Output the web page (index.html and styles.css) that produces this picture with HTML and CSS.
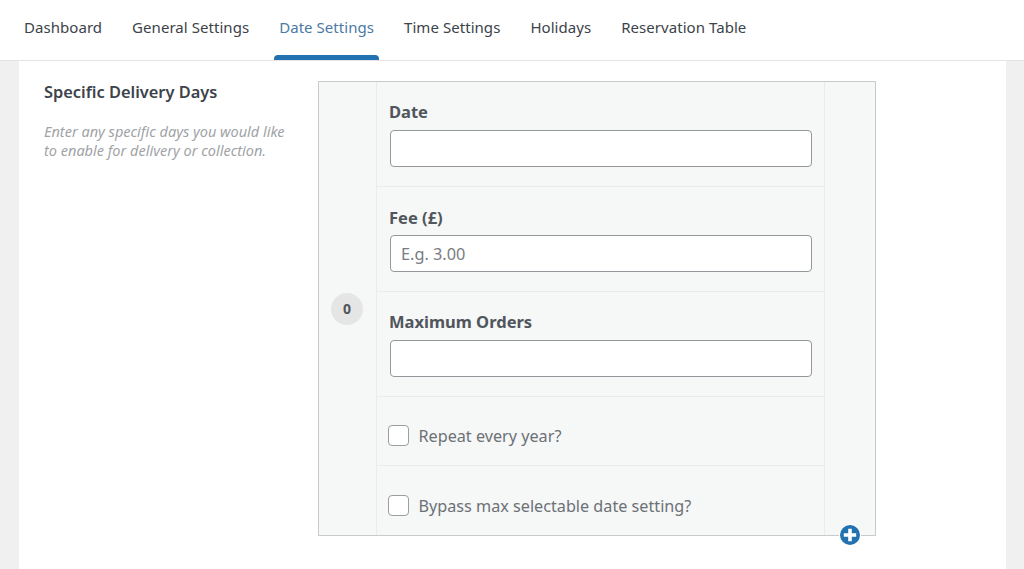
FILE: index.html
```html
<!DOCTYPE html>
<html lang="en">
<head>
<meta charset="utf-8">
<title>Date Settings</title>
<link rel="stylesheet" href="styles.css">
</head>
<body>
<nav class="tabs">
  <a class="tab">Dashboard</a>
  <a class="tab">General Settings</a>
  <a class="tab active">Date Settings</a>
  <a class="tab">Time Settings</a>
  <a class="tab">Holidays</a>
  <a class="tab">Reservation Table</a>
</nav>
<main class="panel">
  <div class="intro">
    <h2 class="title">Specific Delivery Days</h2>
    <p class="desc">Enter any specific days you would like to enable for delivery or collection.</p>
  </div>
  <div class="repeater">
    <div class="handle"><span class="count">0</span></div>
    <div class="fields">
      <div class="row field">
        <label class="label">Date</label>
        <input class="input" type="text">
      </div>
      <div class="row field fee">
        <label class="label">Fee (£)</label>
        <input class="input" type="text" placeholder="E.g. 3.00">
      </div>
      <div class="row field">
        <label class="label">Maximum Orders</label>
        <input class="input" type="text">
      </div>
      <div class="row check first">
        <span class="box"></span><span class="check-text">Repeat every year?</span>
      </div>
      <div class="row check last">
        <span class="box"></span><span class="check-text">Bypass max selectable date setting?</span>
      </div>
    </div>
    <div class="actions">
      <svg class="add" viewBox="0 0 22 22" aria-hidden="true">
        <circle cx="11" cy="11" r="11" fill="#fff"/>
        <circle cx="11" cy="11" r="10" fill="#2271b1"/>
        <path d="M9.2 4.8h3.6v4.4h4.4v3.6h-4.4v4.4H9.2v-4.4H4.8V9.2h4.4z" fill="#fff"/>
      </svg>
    </div>
  </div>
</main>
</body>
</html>
```
FILE: styles.css
```css
* { box-sizing: border-box; }
html, body { margin: 0; height: 100%; }
body {
  background: #f0f0f1;
  font-family: "Noto Sans", "Open Sans", sans-serif;
  color: #3c434a;
  overflow: hidden;
}
.tabs {
  display: flex;
  gap: 20px;
  height: 61px;
  padding-left: 19px;
  background: #fff;
  border-bottom: 1px solid #e2e4e7;
}
.tab {
  height: 60px;
  padding: 17px 5px 0;
  font-size: 15px;
  line-height: 21px;
  color: #3c434a;
  letter-spacing: 0.05px;
}
.tab.active {
  color: #4a7aa5;
  position: relative;
}
.tab.active::after {
  content: "";
  position: absolute;
  left: 0;
  right: 0;
  bottom: 0;
  height: 5px;
  background: #2271b1;
  border-radius: 4px 4px 0 0;
}
.panel {
  display: flex;
  margin: 0 18px 0 19px;
  height: 508px;
  padding: 20px 0 0 25px;
  background: #fff;
}
.intro { width: 274px; flex: none; }
.title {
  margin: 0;
  font-size: 16.4px;
  line-height: 22px;
  font-weight: 600;
  color: #3c434a;
}
.desc {
  margin: 19px 0 0;
  width: 250px;
  font-size: 14.5px;
  line-height: 19px;
  font-style: italic;
  color: #a0a3a6;
}
.repeater {
  display: flex;
  width: 558px;
  height: 455px;
  background: #f6f7f7;
  border: 1px solid #c8cacc;
}
.handle {
  display: flex;
  width: 58px;
  flex: none;
  align-items: center;
  justify-content: center;
  padding-right: 1px;
  border-right: 1px solid #e9ebec;
}
.count {
  display: flex;
  align-items: center;
  justify-content: center;
  width: 32px;
  height: 32px;
  border-radius: 50%;
  background: #e5e5e5;
  font-size: 14px;
  font-weight: 700;
  color: #50565c;
}
.fields {
  width: 448px;
  flex: none;
  border-right: 1px solid #e9ebec;
}
.row {
  border-bottom: 1px solid #e9ebec;
  padding: 0 13px;
}
.field { height: 105px; padding-top: 19px; }
.fee { padding-top: 20px; }
.fee .label { margin-bottom: 6px; }
.label {
  display: block;
  margin-left: -1px;
  font-size: 16.5px;
  line-height: 22px;
  font-weight: 700;
  color: #50565c;
  margin-bottom: 7px;
}
.input {
  display: block;
  width: 422px;
  height: 37px;
  padding: 1px 10px 0;
  background: #fff;
  border: 1px solid #94979b;
  border-radius: 4px;
  font: 16.3px "Noto Sans", "Open Sans", sans-serif;
  color: #3c434a;
}
.input::placeholder { color: #787c82; opacity: 1; }
.check {
  display: flex;
  align-items: center;
  padding-left: 11px;
  padding-right: 0;
}
.first { height: 69px; padding-top: 9px; }
.last { height: 68px; padding-top: 11px; border-bottom: 0; }
.box {
  width: 21px;
  height: 21px;
  flex: none;
  background: #fff;
  border: 1.5px solid #9a9da1;
  border-radius: 4px;
}
.check-text {
  margin-left: 9.5px;
  font-size: 16.2px;
  color: #6c7176;
}
.actions {
  flex: 1;
  position: relative;
}
.add {
  position: absolute;
  left: 14px;
  bottom: -11px;
  width: 22px;
  height: 22px;
}
```
